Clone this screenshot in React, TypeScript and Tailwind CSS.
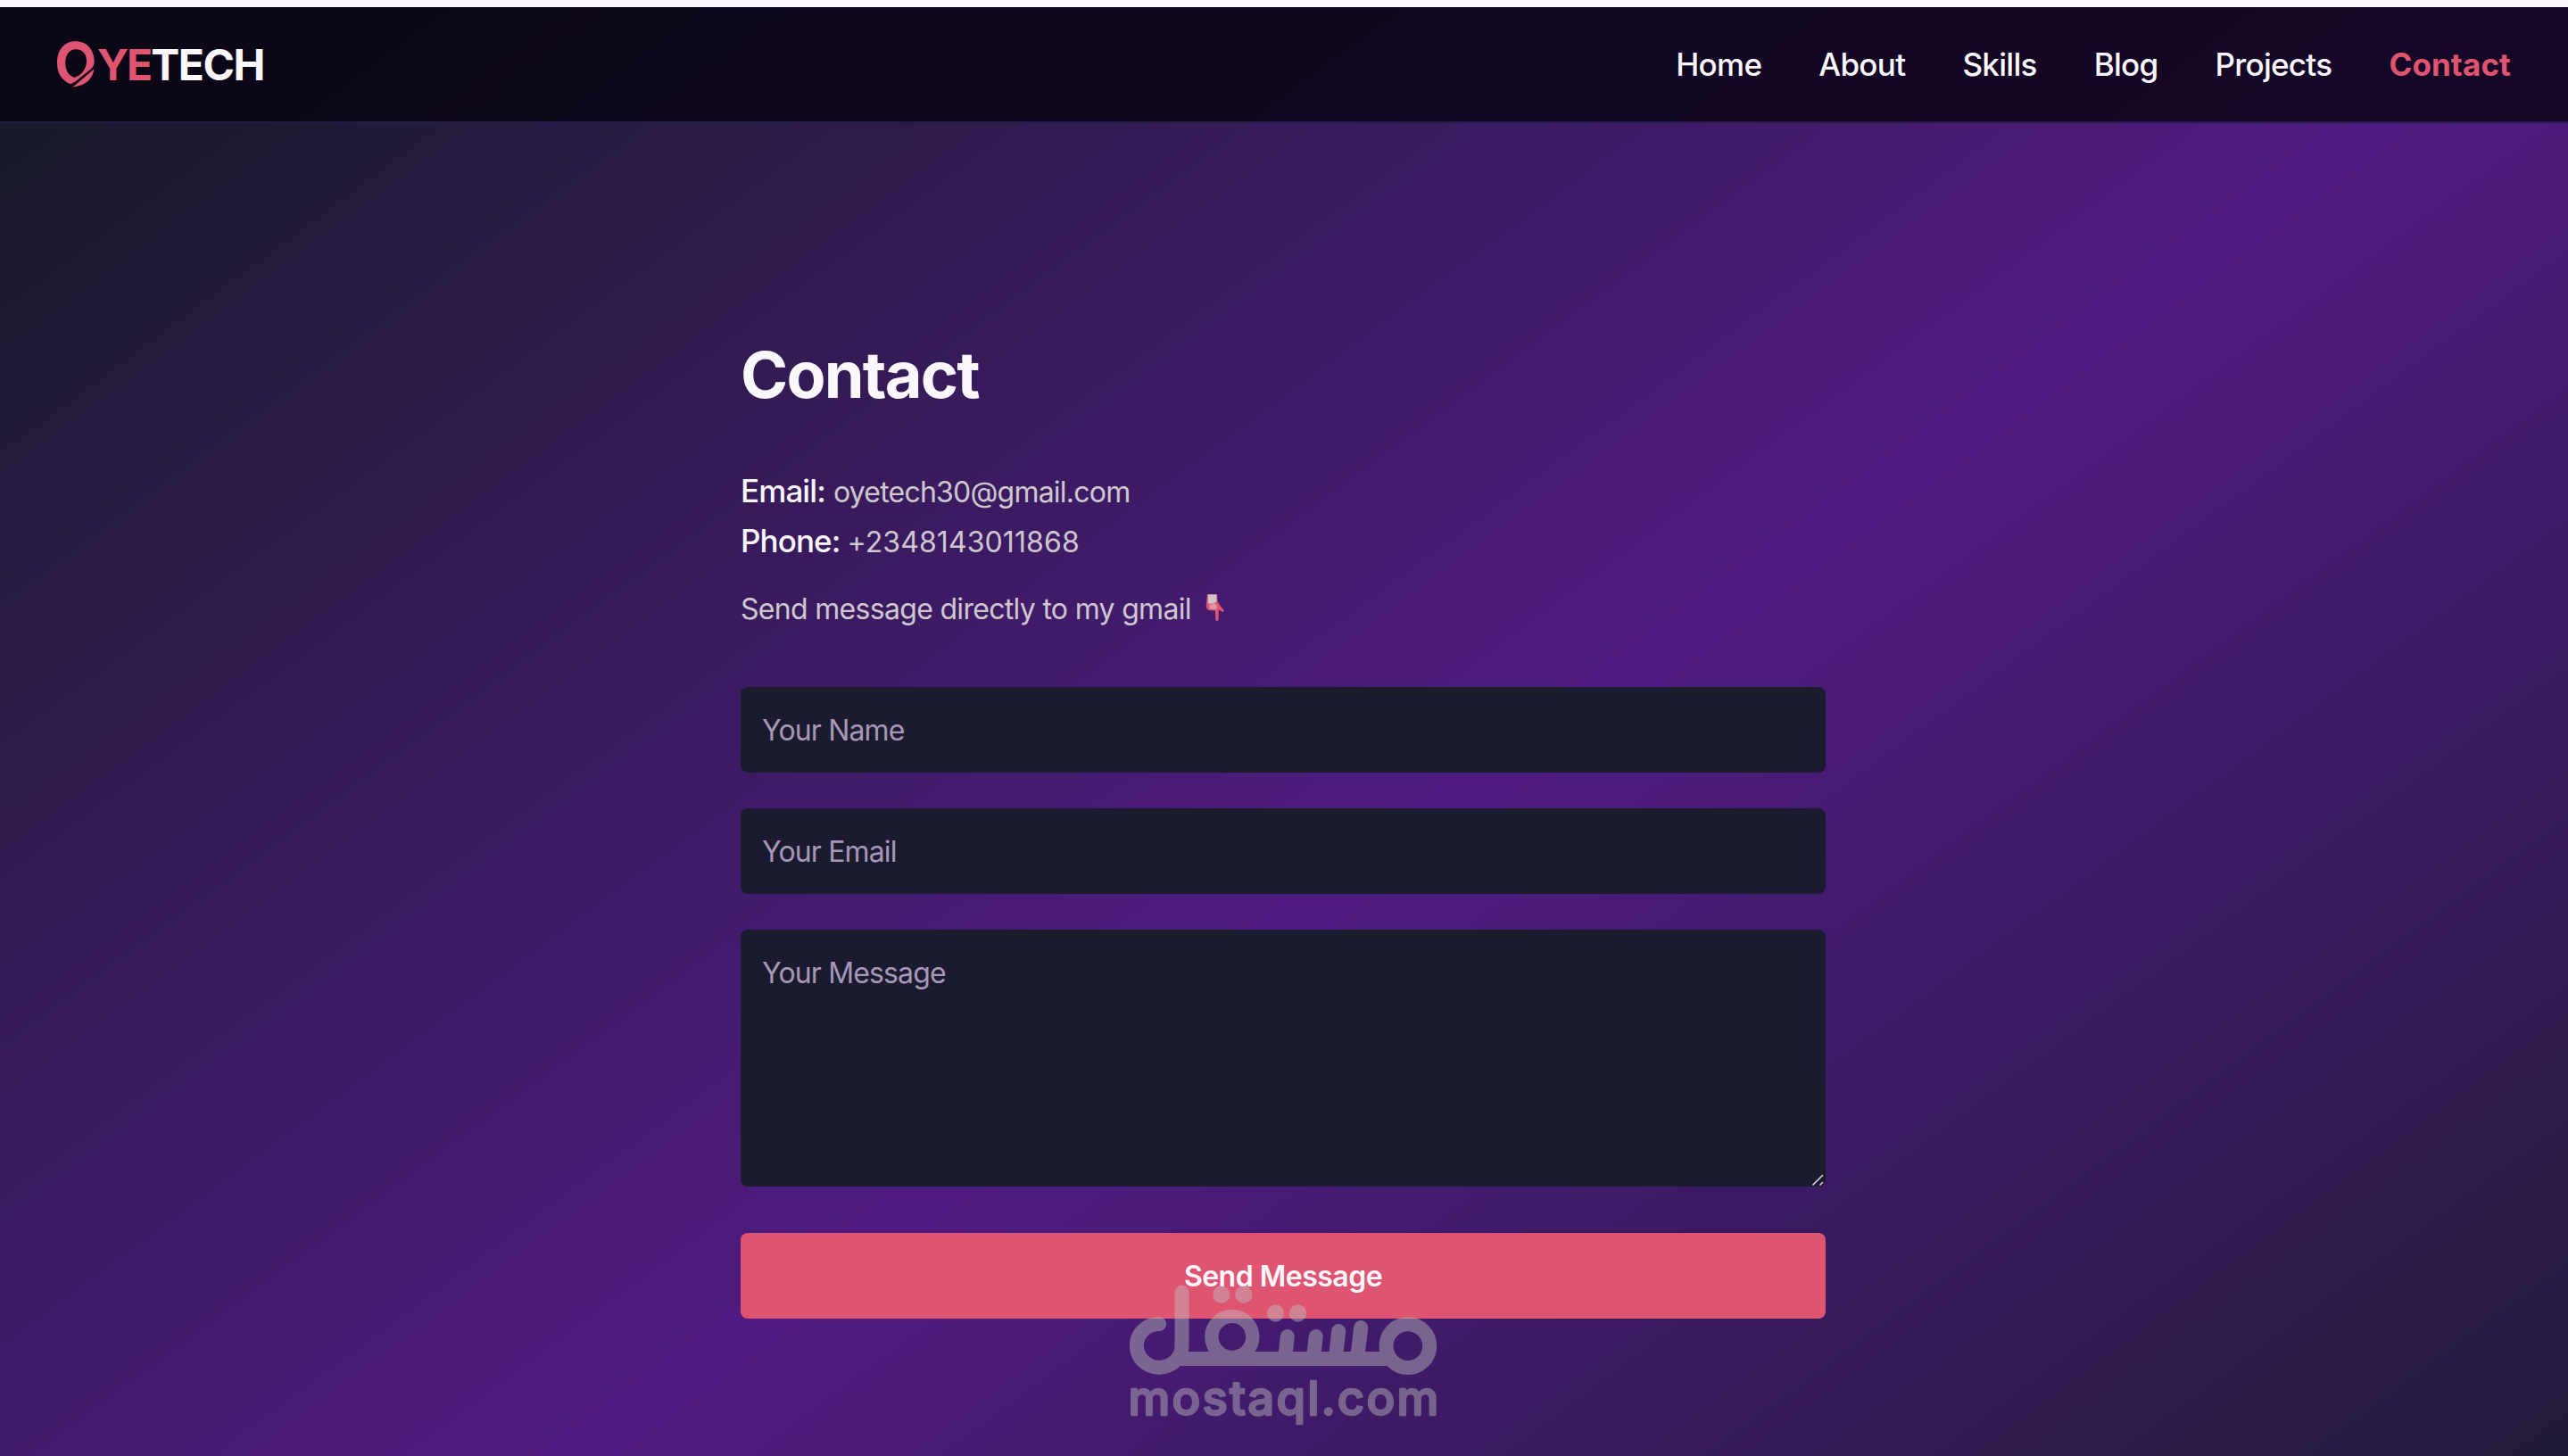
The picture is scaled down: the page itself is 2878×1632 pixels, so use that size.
import { useState } from 'react';

const links = ['Home', 'About', 'Skills', 'Blog', 'Projects'];

function LogoMark() {
  return (
    <svg viewBox="192 138 127 156" className="mr-[3px] h-[52px] w-[42px]" fill="#df5571">
      <path
        fillRule="evenodd"
        d="M238 283C208 272 192 246 192 212C192 168 216 138 255 138C294 138 318 168 318 208C318 217 314 225 307 232L265 266C256 274 248 279 238 283ZM250 261C274 256 292 232 292 205C292 181 278 165 256 165C233 165 220 184 220 211C220 237 231 255 250 261Z"
      />
      <path d="M243 293C256 287 263 277 275 268L317 233C314 264 287 292 243 293Z" />
    </svg>
  );
}

function PointDown() {
  return (
    <svg viewBox="0 0 22 32" className="relative -top-0.5 ml-[15px] h-8 w-[22px]">
      <path d="M3 1L14 1L14.5 9L17 13L22 19.5L20.5 21L15.8 18.5L15.5 30Q14 32 12.3 30L12 19.5L5 19Q1.5 18 1.8 13Z" fill="#df5571" />
      <path d="M3.8 1.5H13.5V9L10 11.5L4 11.5Z" fill="#cdc6cb" />
      <path d="M5 13L12 11.5L14 15L13.5 18L6 17.5Z" fill="#dd97a6" />
    </svg>
  );
}

function Watermark() {
  return (
    <div className="pointer-events-none absolute top-[1440px] left-[1266px]">
      <svg viewBox="138 210 1034 480" className="h-[160px] w-[345px] opacity-45" fill="none" stroke="#bebebe" strokeWidth="48">
        <circle cx="1073" cy="416" r="73" />
        <path d="M290 459H1020" />
        <path d="M313 236V416A76 73 0 1 1 237 342" strokeLinecap="round" />
        <circle cx="482" cy="385" r="69" strokeWidth="46" />
        <path d="M668 384L661 450M764 384L756 450M840 366L831 450M915 354L904 450" strokeLinecap="round" />
        <g fill="#bebebe" stroke="none">
          <circle cx="446" cy="243" r="29" />
          <circle cx="521" cy="243" r="29" />
          <circle cx="628" cy="306" r="29" />
          <circle cx="703" cy="306" r="29" />
        </g>
        <text
          x="133"
          y="648"
          textLength="1043"
          fontSize="158"
          fontWeight="500"
          fontFamily="Inter, sans-serif"
          fill="#bebebe"
          strokeWidth="7"
          strokeLinejoin="round"
        >
          mostaql.com
        </text>
      </svg>
    </div>
  );
}

export default function App() {
  const [name, setName] = useState('');
  const [email, setEmail] = useState('');
  const [message, setMessage] = useState('');

  const field =
    'block w-full rounded-lg bg-[#1a1b2e] px-6 text-[32px] tracking-[-0.85px] text-white placeholder-[#a897b8] outline-none';

  return (
    <div className="relative h-[1632px] overflow-hidden bg-[#fbf7fd] pt-2 font-['Inter',sans-serif] text-[#fbf7fd]">
      <div className="h-[1624px] bg-[linear-gradient(143.5deg,#1a1a2e_5%,#501b81_56%,#1a1a2e_107%)]">
        <nav className="flex h-[130px] items-center justify-between border-b-2 border-[#231c48] bg-[rgba(7,3,18,0.8)] px-16">
          <div className="flex items-center text-5xl font-bold">
            <LogoMark />
            <span className="pt-0.5 tracking-[-2px] text-[#df5571]">YE</span>
            <span className="pt-0.5 tracking-[-1.5px]">TECH</span>
          </div>
          <div className="flex items-center gap-16 text-[35px] font-medium tracking-[-0.7px]">
            {links.map((label) => (
              <a key={label} href="#">
                {label}
              </a>
            ))}
            <a href="#" className="font-bold tracking-[0.1px] text-[#df5571]">
              Contact
            </a>
          </div>
        </nav>

        <main className="ml-[830px] w-[1216px] pt-[242px]">
          <h1 className="text-[72px] leading-[80px] font-bold tracking-[-1.8px]">Contact</h1>

          <div className="mt-[62px] text-[32px] leading-[56px] text-[#cfc8cf]">
            <p className="flex h-14 items-baseline">
              <span className="mr-[9px] text-[35px] font-medium tracking-[-0.9px] text-[#fbf7fd]">Email:</span>
              <span className="tracking-[-0.78px]">oyetech30@gmail.com</span>
            </p>
            <p className="flex h-14 items-baseline">
              <span className="mr-2 text-[35px] font-medium tracking-[-0.9px] text-[#fbf7fd]">Phone:</span>
              <span className="tracking-[0.1px]">+2348143011868</span>
            </p>
            <p className="mt-[21px] flex h-14 items-center">
              <span className="tracking-[-0.69px]">Send message directly to my gmail</span>
              <PointDown />
            </p>
          </div>

          <form className="mt-[59px]" onSubmit={(e) => e.preventDefault()}>
            <input
              className={`${field} h-24`}
              placeholder="Your Name"
              value={name}
              onChange={(e) => setName(e.target.value)}
            />
            <input
              className={`${field} mt-10 h-24`}
              placeholder="Your Email"
              value={email}
              onChange={(e) => setEmail(e.target.value)}
            />
            <div className="relative mt-10">
              <textarea
                className={`${field} h-72 resize-none py-[25px] leading-[48px]`}
                placeholder="Your Message"
                value={message}
                onChange={(e) => setMessage(e.target.value)}
              />
              <svg viewBox="0 0 14 14" className="absolute right-[1px] bottom-0 h-[14px] w-[14px]" stroke="#d9cfe2" strokeWidth="1.6">
                <path d="M0.5 12.5L12 1M8.5 12.5L12 9" />
              </svg>
            </div>
            <button className="mt-[52px] block h-24 w-full rounded-lg bg-[#df5571] pt-0.5 text-[32px] font-semibold tracking-[-0.5px]">
              Send Message
            </button>
          </form>
        </main>
      </div>
      <Watermark />
    </div>
  );
}
